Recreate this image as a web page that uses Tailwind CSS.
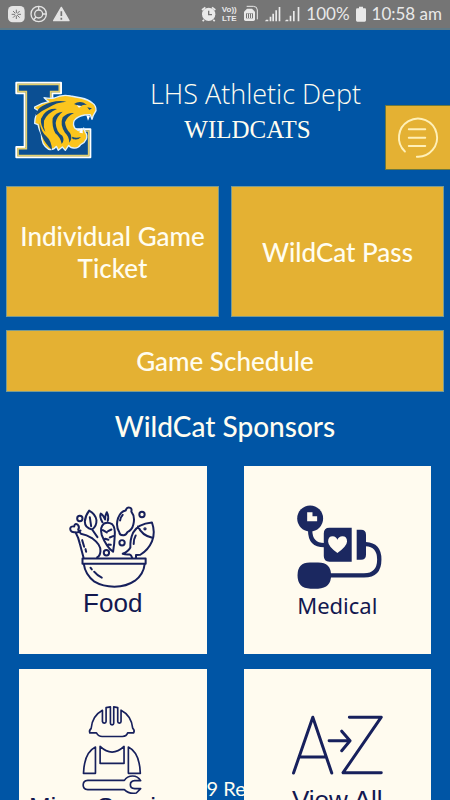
<!DOCTYPE html>
<html lang="en">
<head>
<meta charset="utf-8">
<meta name="viewport" content="width=device-width, initial-scale=1">
<title>LHS Athletic Dept</title>
<script src="https://cdn.jsdelivr.net/npm/@tailwindcss/browser@4"></script>
</head>
<body class="bg-[#0055a5] font-['Lato',sans-serif] text-[#fffdf0]">
<div class="relative flex h-screen flex-col overflow-hidden">

  <!-- Status bar -->
  <div class="flex h-[30px] shrink-0 items-center border-b-2 border-[#5f7a87] bg-[#757575] px-2 text-[#e9e9e9]">
    <svg class="h-[30px] w-16 shrink-0" viewBox="24 0 192 90" fill="none" stroke="#e4e4e4" aria-hidden="true">
      <rect x="24" y="21" width="50" height="49" rx="14" fill="#e4e4e4" stroke="none"/>
      <path d="M49 32v28M35 46h28M39 36l20 20M59 36L39 56" stroke="#757575" stroke-width="3"/>
      <circle cx="49" cy="46" r="4" fill="#e4e4e4" stroke="none"/>
      <circle cx="116" cy="45" r="23" stroke-width="4"/><circle cx="116" cy="45" r="12" stroke-width="4"/>
      <path d="M116 22v11M128 45h11M108 54l-8 9" stroke-width="4"/>
      <path d="M184 25l23 40h-46z" fill="#e4e4e4" stroke-width="4" stroke-linejoin="round"/>
      <path d="M184 37v14M184 56v6" stroke="#757575" stroke-width="5"/>
    </svg>
    <div class="ml-auto flex items-center">
      <svg class="h-[30px] w-4" viewBox="34 0 48 90" aria-hidden="true">
        <circle cx="57" cy="46" r="20" fill="#e9e9e9"/>
        <path d="M37 33l10-8M77 33l-10-8M43 62l-4 5M71 62l4 5" stroke="#e9e9e9" stroke-width="5"/>
        <path d="M57 35v12h10" fill="none" stroke="#757575" stroke-width="4"/>
      </svg>
      <span class="mr-1.5 ml-1 w-4 text-center font-['Liberation_Sans',sans-serif] text-[8px] leading-[9px] font-bold">Vo))<br>LTE</span>
      <svg class="h-[30px] w-[57px]" viewBox="162 0 171 90" fill="#e9e9e9" aria-hidden="true">
        <path d="M173 22h20q12 0 12 11v28" fill="none" stroke="#e9e9e9" stroke-width="3"/>
        <path d="M174 29h15l9 9v23q0 5-5 5h-23q-5 0-5-5V38z"/>
        <path d="M171 43h21v15h-21z" fill="#757575"/><path d="M174 44h3v13h-3zM180 44h3v13h-3zM186 44h3v13h-3z"/>
        <path d="M231 62h7v5h-10zM242 53h5v14h-5zM250 44h5v23h-5zM259 34h5v33h-5zM269 24h5v43h-5z"/>
        <path d="M291 62h7v5h-10zM302 50h5v17h-5zM312 36h5v31h-5zM326 24h5v43h-5z"/>
      </svg>
      <span class="ml-1.5 text-[17px]">100%</span>
      <svg class="mx-1.5 h-[30px] w-[10px]" viewBox="495 0 30 90" fill="#e9e9e9" aria-hidden="true"><path d="M504 23h12v5h6q3 0 3 4v32q0 4-4 4h-22q-4 0-4-4V32q0-4 4-4h5z"/></svg>
      <span class="text-[17px] whitespace-nowrap">10:58 am</span>
    </div>
  </div>

  <!-- Footer stays behind the scrolling sponsor cards -->
  <footer class="absolute inset-x-0 bottom-0 pl-1 text-center text-[20px] leading-6 whitespace-nowrap">© 2019 Reserved</footer>

  <div class="relative flex-1 overflow-y-auto [scrollbar-width:none]">
    <header class="flex pt-10">
      <svg class="h-[100px] w-[110px] shrink-0" viewBox="0 0 330 300" role="img" aria-label="Wildcats logo">
        <path d="M49 38h134v32h-26v122h68v-14h46v84H49v-31h25V70H49z" fill="#0b4f93" stroke="#fff" stroke-width="6" stroke-linejoin="round"/>
        <path d="M54 43h124v22h-26v132h78v-14h36v74H54v-21h25V65H54z" fill="none" stroke="#e3cf6d" stroke-width="5"/>
        <path d="M104 111q21-12 42-16-8-5-14-12 17 4 31 1 24-12 49-6l32 6q20 4 34 16 11 8 10 22l-8 14-4 12-5-14-17 1q-20 3-31 16-6 13 2 24 8 8 20 9l6-10 5 13q7 8 3 20-5 12-17 17-8 12-21 10-10 0-15-8l-10 15-9-10-12 10-6-12q-8 12-23 9-22-12-22-45-6-11-10-29l-10-4q1-28 12-35-4-7-12-10z" fill="#fbc51d" stroke="#dff1ff" stroke-width="4" stroke-linejoin="round"/>
        <g fill="#174b79">
          <path d="M127 108q37-20 72-13-31 2-54 18-20 8-39 25 4-20 21-30z"/>
          <path d="M131 133q16-19 40-16-29 12-39 35-3 18 4 34-16-21-13-40z"/>
          <path d="M158 145q8-18 30-20-19 15-21 34 2 28 20 38 8 14-2 25-4-21-19-32-11-20-8-45z"/>
          <path d="M119 158q4 26 20 41 16 14 17 41-21-19-30-41-8-18-7-41z"/>
          <path d="M188 142q15-15 34-13-20 9-27 28 2 20 15 32 9 14-2 29-1-20-13-30-16-23-7-46z"/>
          <path d="M222 102q13-9 29-4l10 7q-14-2-20 5-9-5-19-8zM262 112l14 3-8 5zM217 200q10 6 26 1-9 10-20 7-9-1-6-8z"/>
        </g>
        <path d="M230 106l15 2-8 5zM259 136l5 16 6-14zM238 188l6-15 5 17z" fill="#fff"/>
      </svg>
      <div class="flex-1 pt-1.5 text-center">
        <h1 class="pl-4 font-['Open_Sans',sans-serif] text-[27px] leading-9 font-light whitespace-nowrap">LHS Athletic Dept</h1>
        <p class="font-['Liberation_Serif',serif] text-[25px] leading-9">WILDCATS</p>
      </div>
      <button type="button" aria-label="Menu" class="size-[65px] shrink-0 self-end border border-r-0 border-[#6c783e] bg-[#e4b133]">
        <svg class="size-full" viewBox="768 105 195 195" fill="none" stroke="#fff0b8" stroke-width="6" stroke-linecap="round" aria-hidden="true">
          <path d="M825 246A59 59 0 1 1 862 262"/><path d="M837 177h51M837 203h51M837 229h51"/>
        </svg>
      </button>
    </header>

    <main>
      <nav class="grid grid-cols-2 gap-x-3 gap-y-[13px] px-1.5 pt-4 text-center text-[26px] leading-8 font-medium">
        <a href="#ticket" class="flex h-[131px] items-center justify-center border border-[#7b9b91] bg-[#e4b133] px-2">Individual Game Ticket</a>
        <a href="#pass" class="flex h-[131px] items-center justify-center border border-[#7b9b91] bg-[#e4b133] px-2">WildCat Pass</a>
        <a href="#schedule" class="col-span-2 flex h-[62px] items-center justify-center border border-[#7b9b91] bg-[#e4b133]">Game Schedule</a>
      </nav>

      <h2 class="pt-3.5 pb-5 text-center text-[28px] leading-10 font-medium">WildCat Sponsors</h2>

      <section class="grid grid-cols-2 gap-x-[37px] gap-y-[15px] px-[19px] font-['Liberation_Sans',sans-serif] text-[26px] leading-[26px] text-[#13184f]">
        <a href="#food" class="block aspect-square bg-[#fffbef] text-center">
          <svg class="block w-full overflow-visible" viewBox="0 0 188 124" fill="none" stroke="#17205c" aria-hidden="true">
            <g transform="translate(31 24) scale(.3333)" stroke-width="6" stroke-linejoin="round" stroke-linecap="round">
              <path d="M98 206h190v16H98zM102 223q4 31 32 53 25 15 60 15 37 0 62-18 26-20 29-50"/>
              <path d="M122 234l4 5M133 246q10 12 23 18"/>
              <circle cx="90" cy="86" r="8"/><circle cx="277" cy="74" r="8"/><circle cx="217" cy="159" r="8"/><circle cx="170" cy="189" r="8"/>
              <path d="M101 203l-11-41q-3-17-13-35-15 2-16-10 1-9 12-7 2-12 11-5 6 6 1 15l8 12q17 3 35 14 26 19 24 38-1 14-10 19M78 128q8 1 14-6M97 151l6 20M107 178l2 8"/>
              <path d="M143 142l-16-23q-22-4-22-24 1-17 13-33 19 10 22 29 1 18-13 28zM120 82l4 27"/>
              <path d="M190 186q-20-14-34-50-7-24 7-35 12-6 24 2 10 10 8 34-1 27-5 49zM158 97q-10-16-5-26 8 4 13 18 0-14 5-22 7 12 3 26M159 121l12 7M185 119l-10 5M166 147l10 3M190 139l-10 4M176 164l7 1"/>
              <path d="M209 128q-12-19-4-43 8-21 23-23 3-12 14-8 5 2 3 11 12 15 6 39-4 17-18 23-4 10-13 9-11 0-11-8zM211 92q2-11 8-17"/>
              <path d="M247 203q-2-8-7-9-12 1-21-2 17-7 23-19-1-25 8-44 14-27 57-31 11 30 0 57-11 26-35 40l-13 1v7M265 110q12 27 43 34M252 163q0-16 6-26"/><circle cx="286" cy="117" r="2"/>
            </g>
          </svg>
          Food
        </a>
        <a href="#medical" class="block aspect-square bg-[#fffbef] text-center">
          <svg class="block w-full overflow-visible" viewBox="0 0 188 126" aria-hidden="true">
            <g transform="translate(26 24) scale(.3333)" fill="#1b2860">
              <circle cx="121" cy="86" r="39"/>
              <path d="M121 122q0 44 42 44M288 163q41 2 41 46 0 48-46 48H180" fill="none" stroke="#1b2860" stroke-width="13"/>
              <path d="M179 114h67v102h-67q-17 0-17-17v-68q0-17 17-17zM261 120h13q15 0 15 15v60q0 15-15 15h-13z"/>
              <path d="M122 218h23q39 0 39 39t-39 40h-23q-39 0-39-40t39-39z"/>
              <path d="M112 67h16v12h14v15h-30zM203 190q-28-21-28-35 0-16 14-16 10 0 14 11 4-11 15-11 14 0 14 16 0 13-29 35z" fill="#fffbef"/>
            </g>
          </svg>
          <span class="font-['Noto_Sans',sans-serif] text-[22px]">Medical</span>
        </a>
        <a href="#services" class="block aspect-square bg-[#fffbef] text-center">
          <svg class="block w-full overflow-visible" viewBox="0 0 188 126" fill="none" stroke="#17205c" aria-hidden="true">
            <g transform="translate(-9 -8) scale(.3333)" stroke-width="5" stroke-linejoin="round">
              <path d="M278 148q-31 17-34 55-7 6-4 13h20q6 11 17 11h61q13 0 16-11h18q4-7-3-14-4-38-35-54v34q0 5-5 5t-5-5v-42l-12-2v49q0 5-5 5t-5-5v-49l-13 2v42q0 5-5 5t-6-5z"/>
              <path d="M257 259q-34 17-36 79h36zM356 259q34 17 36 79h-36zM271 257q36 34 72 0v51h-72z"/>
              <path d="M344 359H234q-14 1-14 14t14 14h110q14 14 36 10l13-13h-18q-13-1-13-12t13-12h18q-9-14-24-14-17 0-25 13z"/>
            </g>
          </svg>
          Misc. Services
        </a>
        <a href="#all" class="block aspect-square bg-[#fffbef] text-center">
          <svg class="block w-full overflow-visible" viewBox="0 0 188 119" fill="none" stroke="#17205c" aria-hidden="true">
            <g transform="translate(-44 -8) scale(.3333)" stroke-width="9" stroke-linejoin="round" stroke-linecap="round">
              <path d="M281 337l58-168 57 168M300 289h78M449 169h96L430 336h115M388 240h62M426 211l25 29-25 30"/>
            </g>
          </svg>
          View All
        </a>
      </section>
    </main>
  </div>
</div>
</body>
</html>
